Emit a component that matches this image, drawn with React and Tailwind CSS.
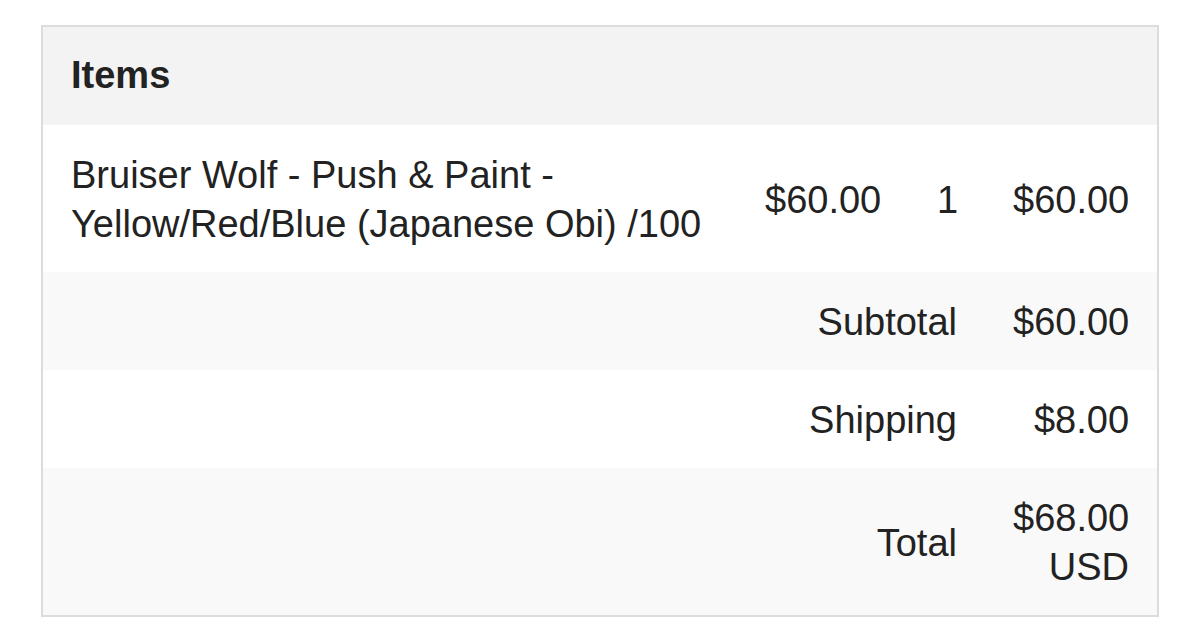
import React from "react";

export default function App() {
  const head = "px-7 pt-6 pb-[25px] leading-[49px] align-middle";
  const cell = "px-7 pt-[26px] pb-[23px] leading-[49px] align-middle";
  return (
    <div className="w-[1200px] h-[642px] bg-white pt-[25px] pl-[41px] text-[#222222]" style={{ fontFamily: '"Liberation Sans", Arial, Helvetica, sans-serif' }}>
      <div className="w-[1118px] border-2 border-[#dcdcdc]">
        <table className="w-full table-fixed border-collapse text-[38px]">
          <colgroup>
            <col className="w-[694px]" />
            <col className="w-[172px]" />
            <col className="w-[76px]" />
            <col className="w-[172px]" />
          </colgroup>
          <thead>
            <tr className="bg-[#f3f3f3]">
              <th colSpan={4} className={`${head} text-left font-bold`}>Items</th>
            </tr>
          </thead>
          <tbody>
            <tr className="bg-white">
              <td className={`${cell} text-left`}>Bruiser Wolf - Push &amp; Paint - Yellow/Red/Blue (Japanese Obi) /100</td>
              <td className={`${cell} text-right whitespace-nowrap`}>$60.00</td>
              <td className={`${cell} text-right`}>1</td>
              <td className={`${cell} text-right whitespace-nowrap`}>$60.00</td>
            </tr>
            <tr className="bg-[#f9f9f9]">
              <td colSpan={3} className={`${cell} text-right`}>Subtotal</td>
              <td className={`${cell} text-right whitespace-nowrap`}>$60.00</td>
            </tr>
            <tr className="bg-white">
              <td colSpan={3} className={`${cell} text-right`}>Shipping</td>
              <td className={`${cell} text-right whitespace-nowrap`}>$8.00</td>
            </tr>
            <tr className="bg-[#f9f9f9]">
              <td colSpan={3} className={`${cell} text-right`}>Total</td>
              <td className={`${cell} text-right`}>$68.00 USD</td>
            </tr>
          </tbody>
        </table>
      </div>
    </div>
  );
}
